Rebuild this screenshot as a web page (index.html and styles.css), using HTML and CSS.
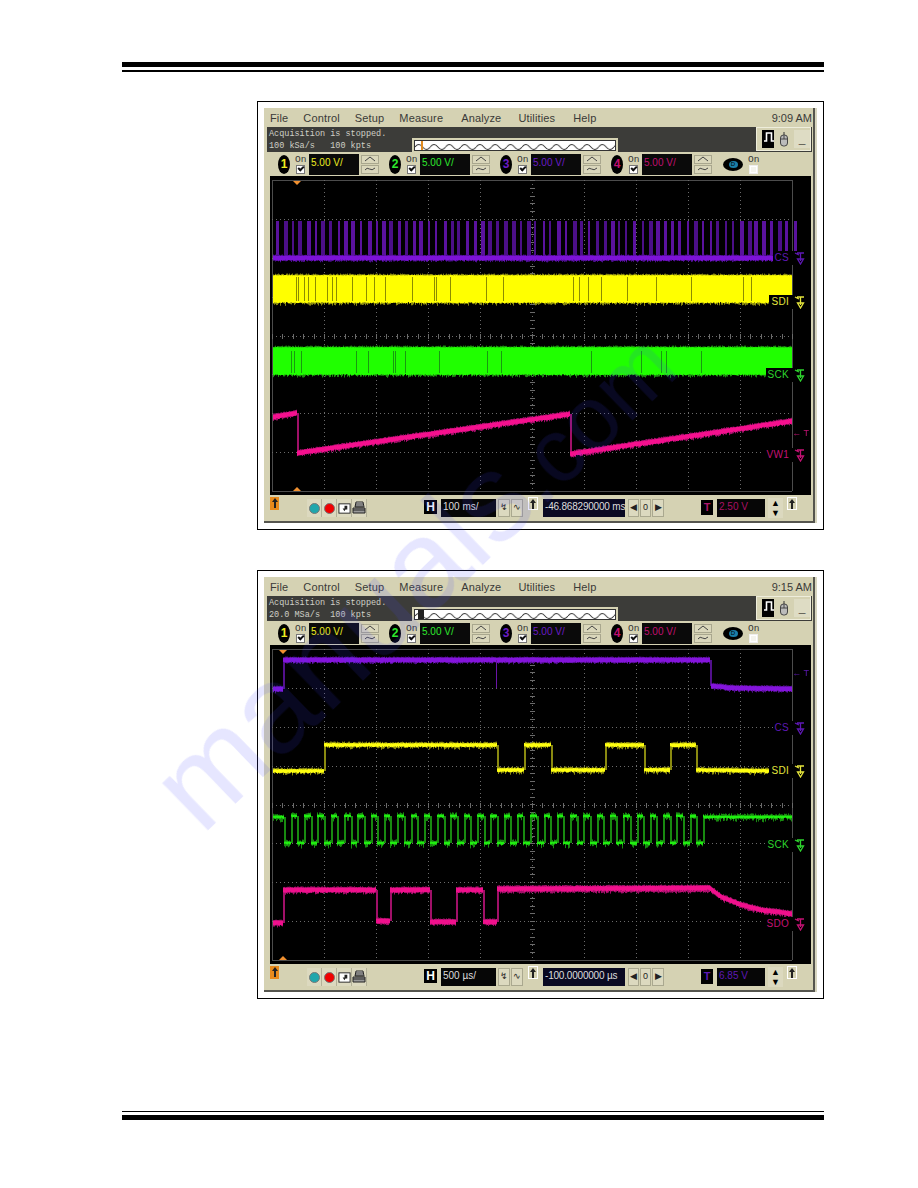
FILE: index.html
```html
<!DOCTYPE html>
<html lang="en">
<head>
  <meta charset="UTF-8" />
  <title>Scope captures</title>
  <link rel="stylesheet" href="styles.css">
</head>
<body>
  <svg class="defs" width="0" height="0">
    <defs>
      <symbol id="wave-up" viewBox="0 0 12 6"><path d="M1 5 L6 1 L11 5" fill="none" stroke="#444"/></symbol>
      <symbol id="wave-s" viewBox="0 0 12 6"><path d="M1 4 Q3 1 5.500 3 T11 2" fill="none" stroke="#444"/></symbol>
      <symbol id="gnd" viewBox="0 0 14 14"><path d="M1 2 L5 4 M3 2 L10 2 M6.500 2 L6.500 10 M3.500 8 L6.500 13 L9.500 8 Z" fill="none" stroke="currentColor" stroke-width="1.300"/></symbol>
      <symbol id="pulse" viewBox="0 0 14 14"><path d="M2 11 L4.500 11 L4.500 3 L9.500 3 L9.500 11 L12 11" fill="none" stroke="#fff" stroke-width="1.600"/></symbol>
      <symbol id="mouse" viewBox="0 0 14 16"><path d="M7 1 L7 4" stroke="#333"/><rect x="3.500" y="4" width="7" height="11" rx="3" fill="#bbb" stroke="#444"/><path d="M3.500 8 H10.500 M7 4 V8" stroke="#444"/></symbol>
      <symbol id="save" viewBox="0 0 14 14"><rect x="1" y="2" width="12" height="10" fill="#fff" stroke="#222"/><path d="M7 4 H10 V8 H8 L7 10 L5 7 H7 Z" fill="#222"/></symbol>
      <symbol id="printer" viewBox="0 0 14 14"><path d="M4 1 H11 L12 6 H3 Z" fill="#ddd" stroke="#222"/><path d="M1 7 H13 V12 H1 Z M1 9 H13 M3 5 H11 M4 3 H11" fill="#999" stroke="#222"/></symbol>
      <symbol id="arrow-up" viewBox="0 0 8 12"><path d="M4 1 L7 5 H5 V11 H3 V5 H1 Z" fill="currentColor"/></symbol>
      <pattern id="strip" width="15.300" height="11" patternUnits="userSpaceOnUse">
        <path d="M0 6 Q3.800 1 7.600 6 T15.300 6" fill="none" stroke="#333"/>
      </pattern>
    </defs>
  </svg>

  <div class="sheet">
    <div class="rule-top"></div>

    <!-- first capture -->
    <figure class="frame">
      <div class="scope">
        <div class="menu">
          <span>File</span><span>Control</span><span>Setup</span><span>Measure</span><span>Analyze</span><span>Utilities</span><span>Help</span>
          <span class="clock">9:09 AM</span>
        </div>
        <div class="status">
          <div class="status-text">Acquisition is stopped.<br>100 kSa/s&nbsp;&nbsp;&nbsp;100 kpts</div>
          <div class="strip-tab"><svg class="strip" width="202" height="11"><rect width="202" height="11" fill="#fff"/><rect width="202" height="11" fill="url(#strip)"/><rect x="6" width="2" height="11" fill="#e08a20"/></svg></div>
          <div class="mode-box">
            <span class="mode on"><svg width="14" height="14"><use href="#pulse"/></svg></span>
            <span class="mode"><svg width="14" height="16"><use href="#mouse"/></svg></span>
            <span class="mode min">_</span>
          </div>
        </div>
        <div class="channels">
          <div class="chan c1"><span class="badge">1</span><span class="on">On<i class="check"></i></span><span class="field">5.00 V/</span><span class="spin"><b><svg width="12" height="6"><use href="#wave-up"/></svg></b><b><svg width="12" height="6"><use href="#wave-s"/></svg></b></span></div>
          <div class="chan c2"><span class="badge">2</span><span class="on">On<i class="check"></i></span><span class="field">5.00 V/</span><span class="spin"><b><svg width="12" height="6"><use href="#wave-up"/></svg></b><b><svg width="12" height="6"><use href="#wave-s"/></svg></b></span></div>
          <div class="chan c3"><span class="badge">3</span><span class="on">On<i class="check"></i></span><span class="field">5.00 V/</span><span class="spin"><b><svg width="12" height="6"><use href="#wave-up"/></svg></b><b><svg width="12" height="6"><use href="#wave-s"/></svg></b></span></div>
          <div class="chan c4"><span class="badge">4</span><span class="on">On<i class="check"></i></span><span class="field">5.00 V/</span><span class="spin"><b><svg width="12" height="6"><use href="#wave-up"/></svg></b><b><svg width="12" height="6"><use href="#wave-s"/></svg></b></span></div>
          <div class="digital"><span class="eye"><i>D</i></span><span class="on">On<i class="check off"></i></span></div>
        </div>
        <div class="screen">
          <canvas class="trace" id="trace1" width="541" height="319"></canvas>
          <span class="mark m-cs t1">CS<svg width="14" height="14"><use href="#gnd"/></svg></span>
          <span class="mark m-sdi t2">SDI<svg width="14" height="14"><use href="#gnd"/></svg></span>
          <span class="mark m-sck t3">SCK<svg width="14" height="14"><use href="#gnd"/></svg></span>
          <span class="mark m-pink t4">VW1<svg width="14" height="14"><use href="#gnd"/></svg></span>
          <span class="trig m-pink t-a">&larr; T</span>
        </div>
        <div class="bottom">
          <span class="flag"><svg width="8" height="12"><use href="#arrow-up"/></svg></span>
          <div class="run">
            <span class="tool"><i class="dot teal"></i></span><span class="tool"><i class="dot red"></i></span><span class="tool"><svg width="13" height="13"><use href="#save"/></svg></span><span class="tool"><svg width="14" height="14"><use href="#printer"/></svg></span>
          </div>
          <div class="timebase">
            <span class="hbox">H</span>
            <span class="val w55">100 ms/</span>
            <span class="btn w12">&#8623;</span><span class="btn w12">&#8767;</span>
            <span class="up"><svg width="8" height="12"><use href="#arrow-up"/></svg></span>
            <span class="val w82 navy">-46.868290000 ms</span>
            <span class="btn w11">&#9664;</span><span class="btn w11">0</span><span class="btn w12">&#9654;</span>
          </div>
          <div class="trigger">
            <span class="tbox pink">T</span>
            <span class="val w48 txt-pink">2.50 V</span>
            <span class="updown"><b>&#9650;</b><b>&#9660;</b></span>
            <span class="up"><svg width="8" height="12"><use href="#arrow-up"/></svg></span>
          </div>
        </div>
      </div>
    </figure>

    <!-- second capture -->
    <figure class="frame second">
      <div class="scope">
        <div class="menu">
          <span>File</span><span>Control</span><span>Setup</span><span>Measure</span><span>Analyze</span><span>Utilities</span><span>Help</span>
          <span class="clock">9:15 AM</span>
        </div>
        <div class="status">
          <div class="status-text">Acquisition is stopped.<br>20.0 MSa/s&nbsp;&nbsp;100 kpts</div>
          <div class="strip-tab"><svg class="strip" width="202" height="11"><rect width="202" height="11" fill="#fff"/><rect width="202" height="11" fill="url(#strip)"/><rect x="3" width="6" height="11" fill="#222"/></svg></div>
          <div class="mode-box">
            <span class="mode on"><svg width="14" height="14"><use href="#pulse"/></svg></span>
            <span class="mode"><svg width="14" height="16"><use href="#mouse"/></svg></span>
            <span class="mode min">_</span>
          </div>
        </div>
        <div class="channels">
          <div class="chan c1"><span class="badge">1</span><span class="on">On<i class="check"></i></span><span class="field">5.00 V/</span><span class="spin"><b><svg width="12" height="6"><use href="#wave-up"/></svg></b><b><svg width="12" height="6"><use href="#wave-s"/></svg></b></span></div>
          <div class="chan c2"><span class="badge">2</span><span class="on">On<i class="check"></i></span><span class="field">5.00 V/</span><span class="spin"><b><svg width="12" height="6"><use href="#wave-up"/></svg></b><b><svg width="12" height="6"><use href="#wave-s"/></svg></b></span></div>
          <div class="chan c3"><span class="badge">3</span><span class="on">On<i class="check"></i></span><span class="field">5.00 V/</span><span class="spin"><b><svg width="12" height="6"><use href="#wave-up"/></svg></b><b><svg width="12" height="6"><use href="#wave-s"/></svg></b></span></div>
          <div class="chan c4"><span class="badge">4</span><span class="on">On<i class="check"></i></span><span class="field">5.00 V/</span><span class="spin"><b><svg width="12" height="6"><use href="#wave-up"/></svg></b><b><svg width="12" height="6"><use href="#wave-s"/></svg></b></span></div>
          <div class="digital"><span class="eye"><i>D</i></span><span class="on">On<i class="check off"></i></span></div>
        </div>
        <div class="screen">
          <canvas class="trace" id="trace2" width="541" height="319"></canvas>
          <span class="mark m-cs t5">CS<svg width="14" height="14"><use href="#gnd"/></svg></span>
          <span class="mark m-sdi t6">SDI<svg width="14" height="14"><use href="#gnd"/></svg></span>
          <span class="mark m-sck t7">SCK<svg width="14" height="14"><use href="#gnd"/></svg></span>
          <span class="mark m-pink t8">SDO<svg width="14" height="14"><use href="#gnd"/></svg></span>
          <span class="trig m-cs t-b">&larr; T</span>
        </div>
        <div class="bottom">
          <span class="flag"><svg width="8" height="12"><use href="#arrow-up"/></svg></span>
          <div class="run">
            <span class="tool"><i class="dot teal"></i></span><span class="tool"><i class="dot red"></i></span><span class="tool"><svg width="13" height="13"><use href="#save"/></svg></span><span class="tool"><svg width="14" height="14"><use href="#printer"/></svg></span>
          </div>
          <div class="timebase">
            <span class="hbox">H</span>
            <span class="val w55">500 &micro;s/</span>
            <span class="btn w12">&#8623;</span><span class="btn w12">&#8767;</span>
            <span class="up"><svg width="8" height="12"><use href="#arrow-up"/></svg></span>
            <span class="val w82 navy">-100.0000000 &micro;s</span>
            <span class="btn w11">&#9664;</span><span class="btn w11">0</span><span class="btn w12">&#9654;</span>
          </div>
          <div class="trigger">
            <span class="tbox violet">T</span>
            <span class="val w48 txt-violet">6.85 V</span>
            <span class="updown"><b>&#9650;</b><b>&#9660;</b></span>
            <span class="up"><svg width="8" height="12"><use href="#arrow-up"/></svg></span>
          </div>
        </div>
      </div>
    </figure>

    <div class="rule-bottom"></div>
    <div class="watermark">manuals<span class="tail">.com</span></div>
  </div>

  <script src="script.js"></script>
</body>
</html>
```
FILE: styles.css
```css
* {
  margin: 0;
  padding: 0;
  box-sizing: border-box;
}

body {
  background-color: #fff;
  font-family: "Liberation Sans", Arial, sans-serif;
  overflow: hidden;
}

.defs {
  position: absolute;
}

.sheet {
  position: relative;
  height: 1188px;
  padding: 62px 94px 0 122px;
  overflow: hidden;
}

/* header and footer rules */
.rule-top {
  height: 10px;
  border-top: 5px solid #000;
  border-bottom: 2px solid #000;
}
.rule-bottom {
  height: 9px;
  margin-top: 112px;
  border-top: 1px solid #000;
  border-bottom: 5px solid #000;
}

.frame {
  width: 567px;
  height: 429px;
  margin: 29px 0 0 135px;
  padding: 6px;
  border: 1px solid #000;
  background-color: #fff;
}
.frame.second {
  margin-top: 40px;
}

.scope {
  height: 415px;
  background-color: #d5d2b3;
  border-right: 2px solid #d8d6c0;
  box-shadow: inset -2px -2px 0 #55554e;
  display: flex;
  flex-direction: column;
  color: #333;
}

.menu {
  height: 19px;
  display: flex;
  align-items: center;
  gap: 15px;
  padding: 0 3px 0 6px;
  font-size: 11px;
  letter-spacing: 0.15px;
  color: #3a3a38;
}
.menu span:nth-child(5) { margin-left: 3px; }
.menu span:nth-child(6) { margin-left: 2px; }
.menu span:nth-child(7) { margin-left: 3px; }
.clock {
  margin-left: auto !important;
  letter-spacing: 0;
}

.status {
  height: 25px;
  margin: 0 3px;
  background-color: #3c3c39;
  display: flex;
  position: relative;
}
.status-text {
  width: 145px;
  padding: 1px 0 0 2px;
  font-family: "Liberation Mono", monospace;
  font-size: 8.500px;
  line-height: 12px;
  color: #cfcfc6;
  white-space: nowrap;
}
.strip-tab {
  width: 206px;
  height: 14px;
  margin-top: 11px;
  padding: 2px;
  background-color: #d5d2b3;
}
.strip {
  display: block;
  border: 1px solid #333;
}
.mode-box {
  width: 55px;
  height: 24px;
  margin-left: auto;
  margin-right: 1px;
  background-color: #d5d2b3;
  border: 1px solid #eeeddb;
  display: flex;
  align-items: center;
  justify-content: center;
  gap: 2px;
}
.mode {
  width: 16px;
  height: 18px;
  display: flex;
  align-items: center;
  justify-content: center;
}
.mode.on {
  background-color: #000;
}
.mode.min {
  font-size: 12px;
  font-weight: bold;
  color: #000;
  background-color: #dedcc4;
}

.channels {
  height: 24px;
  padding-left: 14px;
  display: flex;
}
.chan {
  width: 111px;
  display: flex;
  align-items: center;
  font-size: 10px;
}
.badge {
  width: 12px;
  height: 19px;
  border-radius: 50%;
  background-color: #000;
  font-size: 12px;
  font-weight: bold;
  line-height: 19px;
  text-align: center;
}
.on {
  width: 12px;
  margin-left: 5px;
  font-family: "Liberation Mono", monospace;
  font-size: 9.500px;
  line-height: 9px;
  color: #333;
  display: block;
  white-space: nowrap;
}
.check {
  display: block;
  width: 9px;
  height: 9px;
  margin: 1px 0 0 1px;
  background-color: #fff;
  border: 1px solid #777;
  box-shadow: inset 0 0 0 1px #fff;
  position: relative;
}
.check::after {
  content: "";
  position: absolute;
  left: 1px;
  top: 0;
  width: 4px;
  height: 2px;
  border-left: 2px solid #111;
  border-bottom: 2px solid #111;
  transform: rotate(-45deg);
}
.check.off {
  border-color: #eee;
}
.check.off::after {
  display: none;
}
.field {
  width: 50px;
  height: 21px;
  margin-left: 2px;
  padding-left: 2px;
  background-color: #0a0a0a;
  line-height: 18px;
  white-space: nowrap;
}
.spin {
  width: 18px;
  margin-left: 2px;
  display: flex;
  flex-direction: column;
  gap: 1px;
}
.spin b {
  height: 9px;
  background-color: #dad7bb;
  border: 1px solid #a9a78e;
  display: flex;
  align-items: center;
  justify-content: center;
}
.spin svg {
  display: block;
}
.c1 .badge, .c1 .field { color: #ecec20; }
.c2 .badge, .c2 .field { color: #2ee82e; }
.c3 .badge, .c3 .field { color: #6a1cc4; }
.c4 .badge, .c4 .field { color: #c01070; }

.digital {
  margin-left: 1px;
  display: flex;
  align-items: center;
}
.eye {
  width: 20px;
  height: 13px;
  border-radius: 50%;
  background-color: #000;
  display: flex;
  align-items: center;
  justify-content: center;
}
.eye i {
  width: 9px;
  height: 7px;
  border-radius: 50%;
  background-color: #1a7ea8;
  font-size: 6px;
  font-style: normal;
  line-height: 7px;
  text-align: center;
  color: #000;
}
.digital .check {
  background-color: #f4f4ee;
}

.screen {
  position: relative;
  height: 319px;
  width: 541px;
  margin-left: 6px;
  background-color: #000;
}
.trace {
  display: block;
  filter: blur(0.4px);
}
.mark {
  position: absolute;
  right: 3px;
  padding-left: 2px;
  display: flex;
  align-items: center;
  gap: 5px;
  font-size: 10px;
  line-height: 14px;
  letter-spacing: 0.3px;
  background-color: #000;
}
.trig {
  position: absolute;
  right: 2px;
  font-size: 9px;
  line-height: 12px;
}
.m-cs { color: #5e18b4; }
.m-sdi { color: #e6e63c; }
.m-sck { color: #2ed42e; }
.m-pink { color: #c41274; }
.t1 { top: 75px; }
.t2 { top: 119px; }
.t3 { top: 192px; }
.t4 { top: 272px; }
.t-a { top: 251px; }
.t5 { top: 76px; }
.t6 { top: 119px; }
.t7 { top: 193px; }
.t8 { top: 272px; }
.t-b { top: 22px; }

.bottom {
  height: 27px;
  padding: 2px 0 0 6px;
  display: flex;
  align-items: flex-start;
  font-size: 10px;
}
.flag {
  width: 9px;
  height: 13px;
  background-color: #e88a1c;
  color: #222;
  display: flex;
  justify-content: center;
}
.run {
  width: 60px;
  margin: 2px 0 0 28px;
  display: flex;
}
.tool {
  width: 15px;
  height: 18px;
  display: flex;
  align-items: center;
  justify-content: center;
  background-color: #dcd9bf;
  border-right: 1px solid #b3b198;
}
.dot {
  width: 11px;
  height: 11px;
  border-radius: 50%;
  border: 1px solid #777;
}
.dot.teal { background-color: #1fa6ac; }
.dot.red { background-color: #f00000; }

.timebase {
  margin-left: 57px;
  display: flex;
  align-items: flex-start;
  gap: 1px;
}
.hbox {
  width: 13px;
  height: 14px;
  margin: 3px 3px 0 0;
  background-color: #000;
  color: #fff;
  font-size: 12px;
  font-weight: bold;
  line-height: 14px;
  text-align: center;
}
.val {
  height: 18px;
  margin-top: 2px;
  padding-left: 2px;
  background-color: #060606;
  color: #ddd;
  line-height: 15px;
  white-space: nowrap;
}
.val.navy {
  background-color: #0a0a22;
  font-size: 10px;
  letter-spacing: -0.2px;
  padding-left: 2px;
  margin-left: 4px;
  margin-right: 2px;
  overflow: hidden;
}
.w48 { width: 48px; }
.w55 { width: 55px; margin-right: 1px; }
.w82 { width: 82px; }
.txt-pink { color: #a81064; font-size: 10px; }
.txt-violet { color: #5e18b4; font-size: 10px; }
.btn {
  height: 18px;
  margin-top: 2px;
  background-color: #dcd9bf;
  border: 1px solid #aaa88f;
  font-size: 9px;
  line-height: 15px;
  text-align: center;
  color: #222;
}
.w11 { width: 11px; }
.w12 { width: 12px; }
.up {
  width: 10px;
  height: 13px;
  margin-left: 4px;
  border: 1px solid #fff;
  color: #222;
  display: flex;
  justify-content: center;
}
.trigger {
  margin-left: 37px;
  display: flex;
  align-items: flex-start;
}
.tbox {
  width: 12px;
  height: 15px;
  margin: 3px 4px 0 0;
  background-color: #000;
  font-size: 11px;
  font-weight: bold;
  line-height: 15px;
  text-align: center;
}
.tbox.pink { color: #b0186c; }
.tbox.violet { color: #5e18b4; }
.updown {
  width: 15px;
  margin: 1px 0 0 3px;
  display: flex;
  flex-direction: column;
  font-size: 9px;
  line-height: 10px;
  text-align: center;
  color: #000;
}
.updown b {
  height: 10px;
  font-weight: normal;
  background-color: #dcd9bf;
}

/* page watermark, sits over everything */
.watermark {
  position: absolute;
  left: 215px;
  top: 725px;
  height: 125px;
  font-size: 125px;
  line-height: 125px;
  white-space: nowrap;
  color: rgba(60, 60, 255, 0.13);
  transform: rotate(-44deg);
  transform-origin: 0 100%;
  pointer-events: none;
}
.watermark .tail {
  font-size: 90px;
}
```
FILE: script.js
```js
// draws the two scope screens on canvas
const OX = 269;
const LEFT = 271, RIGHT = 791, TOP_REL = 4, BOT_REL = 315;

// small seeded random so each render looks the same
let seed = 12345;
function rnd() {
  seed = (seed * 1103515245 + 12345) & 0x7fffffff;
  return seed / 0x7fffffff;
}

function drawGrid(ctx, oy) {
  const top = oy + TOP_REL, bot = oy + BOT_REL;
  const stepY = (bot - top) / 8;
  ctx.fillStyle = '#4c4c4c';
  ctx.fillRect(LEFT, top, RIGHT - LEFT, 1);
  ctx.fillRect(LEFT, bot, RIGHT - LEFT, 1);
  ctx.fillRect(LEFT, top, 1, bot - top);
  ctx.fillRect(RIGHT, top, 1, bot - top);

  ctx.fillStyle = '#6a6a6a';
  for (let i = 1; i < 10; i++) {
    const x = LEFT + i * 52;
    for (let y = top; y < bot; y += 4) ctx.fillRect(x, y, 1, 1);
  }
  for (let i = 1; i < 8; i++) {
    const y = Math.round(top + i * stepY);
    for (let x = LEFT; x < RIGHT; x += 4) ctx.fillRect(x, y, 1, 1);
  }

  // ticks on the centre lines
  const cx = LEFT + 260, cy = Math.round(top + 4 * stepY);
  ctx.fillStyle = '#6a6a6a';
  for (let y = top; y < bot; y += stepY / 5) ctx.fillRect(cx - 2, Math.round(y), 5, 1);
  for (let x = LEFT; x < RIGHT; x += 10.4) ctx.fillRect(Math.round(x), cy - 2, 1, 5);
}

function marker(ctx, x, oy) {
  const top = oy + TOP_REL + 1, bot = oy + BOT_REL;
  ctx.fillStyle = '#f09030';
  ctx.beginPath();
  ctx.moveTo(x - 4, top); ctx.lineTo(x + 4, top); ctx.lineTo(x, top + 4);
  ctx.fill();
  ctx.beginPath();
  ctx.moveTo(x - 4, bot); ctx.lineTo(x + 4, bot); ctx.lineTo(x, bot - 4);
  ctx.fill();
}

// noisy slanted band from x0 to x1
function seg(ctx, x0, y0, x1, y1, th, col, dim, noise) {
  for (let x = x0; x < x1; x++) {
    const y = y0 + (y1 - y0) * (x - x0) / (x1 - x0);
    ctx.fillStyle = dim;
    ctx.fillRect(x, y - th / 2 - rnd() * noise, 1, th + rnd() * noise * 2);
    ctx.fillStyle = col;
    ctx.fillRect(x, y - th / 2 + rnd() * 0.5, 1, th - rnd());
  }
}

// pts: [x, y] breakpoints, a step between two points at the same x
function signal(ctx, pts, th, col, dim, noise) {
  for (let i = 0; i < pts.length - 1; i++) {
    const a = pts[i], b = pts[i + 1];
    if (a[0] === b[0]) {
      ctx.fillStyle = dim;
      ctx.fillRect(a[0], Math.min(a[1], b[1]), 2, Math.abs(a[1] - b[1]));
    } else {
      seg(ctx, a[0], a[1], b[0], b[1], th, col, dim, noise);
    }
  }
}

function steps(list) {
  // list: start y, then [x, newY] pairs
  const pts = [[LEFT + 1, list[0]]];
  let y = list[0];
  for (const s of list.slice(1)) {
    pts.push([s[0], y]);
    pts.push([s[0], s[1]]);
    y = s[1];
  }
  return pts;
}

function scopeOne() {
  const ctx = document.getElementById('trace1').getContext('2d');
  const oy = 176;
  ctx.translate(-OX, -oy);
  drawGrid(ctx, oy);

  // CS: thin pulses on a thick baseline
  for (let x = 274; x < RIGHT; x += 7.6) {
    const w = 2 + Math.floor(rnd() * 3);
    ctx.fillStyle = rnd() > 0.5 ? '#4b0f88' : '#5a129e';
    ctx.fillRect(Math.round(x + rnd() * 2), 221, w, 36);
  }
  seg(ctx, LEFT + 1, 258, RIGHT, 258, 5, '#7d12d8', '#4d0f90', 1);

  // SDI
  seg(ctx, LEFT + 1, 289, RIGHT, 289, 28, '#ffff00', '#8a8a10', 1.5);
  ctx.fillStyle = '#8c8c00';
  [295, 297, 303, 307, 314, 326, 331, 335, 351, 365, 373, 384, 411, 433, 435, 449, 485, 502, 572, 578, 587, 600, 626, 655, 690, 742, 750].forEach((x) => {
    ctx.fillRect(x, 277, 1, 24);
  });

  // SCK
  seg(ctx, LEFT + 1, 361, RIGHT, 361, 28, '#20ff00', '#1e8a10', 1.5);
  ctx.fillStyle = '#189a10';
  [290, 293, 300, 355, 367, 392, 394, 404, 438, 486, 500, 590, 640, 660, 665, 700].forEach((x) => {
    ctx.fillRect(x, 351, 1, 22);
  });

  // VW1 ramp
  const pink = '#f5108e', pinkDim = '#a01068';
  signal(ctx, [[LEFT + 1, 417], [296, 413], [296, 453], [569, 414], [569, 454], [RIGHT, 421]], 5, pink, pinkDim, 1.2);

  marker(ctx, 296, oy);
}

function scopeTwo() {
  const ctx = document.getElementById('trace2').getContext('2d');
  const oy = 645;
  ctx.translate(-OX, -oy);
  drawGrid(ctx, oy);

  const violet = '#8414dc', violetDim = '#52108c';
  signal(ctx, steps([689, [282, 660], [709, 687]]).slice(0, 4), 5, violet, violetDim, 1);
  signal(ctx, [[709, 660], [709, 686]], 5, violet, violetDim, 1);
  seg(ctx, 710, 686, 730, 688, 5, violet, violetDim, 1);
  seg(ctx, 730, 688, RIGHT, 689, 5, violet, violetDim, 1);
  ctx.fillStyle = '#6a14a8';
  ctx.fillRect(495, 660, 1, 28);

  const yellow = '#ffff10', yellowDim = '#8a8a10';
  signal(ctx, steps([771, [323, 745], [496, 770], [523, 745], [550, 770], [604, 745], [643, 770], [669, 745], [695, 770]]), 4, yellow, yellowDim, 1.5);
  seg(ctx, 695, 770, 771, 771, 4, yellow, yellowDim, 1.5);

  // SCK clock
  const green = '#20f010', greenDim = '#188a10';
  const clock = [817];
  for (let x = 283; x < 700; x += 13.3) {
    clock.push([Math.round(x), 843]);
    clock.push([Math.round(x + 6.8), 816]);
  }
  clock.push([703, 817]);
  const pts = steps(clock);
  pts.push([RIGHT, 817]);
  signal(ctx, pts, 3, green, greenDim, 2.2);

  const pink = '#f0108c', pinkDim = '#a01068';
  signal(ctx, steps([923, [282, 890], [375, 921], [389, 890], [429, 922], [455, 890], [482, 922], [496, 889], [709, 890]]).slice(0, 16), 5, pink, pinkDim, 1.2);
  signal(ctx, [[496, 889], [708, 888], [720, 897], [740, 905], [760, 910], [RIGHT, 914]], 5, pink, pinkDim, 1.2);

  marker(ctx, 282, oy);
}

scopeOne();
scopeTwo();
```
